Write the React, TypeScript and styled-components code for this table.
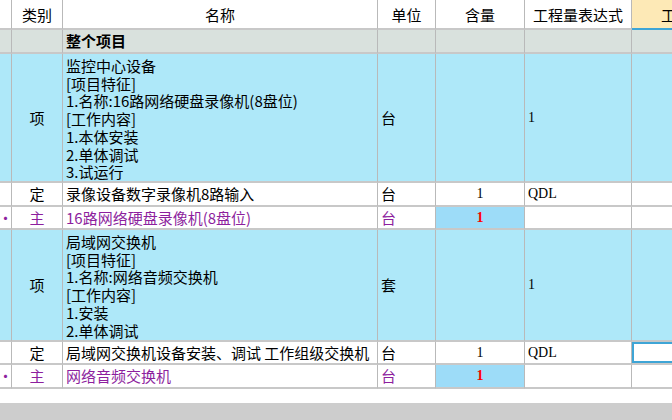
import React from 'react';
import styled, { createGlobalStyle, css } from 'styled-components';

const Global = createGlobalStyle`
  html, body { margin: 0; padding: 0; background: #ffffff; }
  body {
    font-family: "Noto Sans CJK SC", "Noto Sans", sans-serif;
    font-size: 15px;
    color: #000;
    overflow: hidden;
  }
  * { box-sizing: border-box; }
`;

const BLUE = '#aee8f9';
const GROUP = '#d9e1dd';
const PURPLE = '#8d1f9e';
const SEL = '#3ea5d6';

const Page = styled.div`
  width: 672px;
  height: 420px;
  display: flex;
  flex-direction: column;
  overflow: hidden;
  background: #fff;
`;

const Sheet = styled.div<{ $rows: string }>`
  display: grid;
  grid-template-columns: 12px 51px 315px 58px 89px 107px 104px;
  grid-template-rows: ${(p) => p.$rows};
  width: max-content;
`;

type Align = 'left' | 'center';

const Cell = styled.div<{
  $bg?: string;
  $align?: Align;
  $top?: boolean;
  $color?: string;
  $bold?: boolean;
  $num?: boolean;
  $selected?: boolean;
  $line?: string;
}>`
  display: flex;
  align-items: ${(p) => (p.$top ? 'flex-start' : 'center')};
  justify-content: ${(p) => (p.$align === 'center' ? 'center' : 'flex-start')};
  padding: ${(p) => (p.$top ? '3px 3px 0 3px' : '0 3px')};
  background: ${(p) => p.$bg || '#ffffff'};
  border-right: 1px solid #b9b9b9;
  border-bottom: 2px solid ${(p) => p.$line || '#c8c8c8'};
  color: ${(p) => p.$color || '#000'};
  font-weight: ${(p) => (p.$bold ? 700 : 400)};
  white-space: pre-line;
  line-height: 17.7px;
  overflow: hidden;
  ${(p) =>
    p.$num &&
    css`
      font-family: "Liberation Serif", "Noto Sans CJK SC", serif;
      font-size: 14px;
    `}
  ${(p) =>
    p.$selected &&
    css`
      box-shadow: inset 0 0 0 2px ${SEL};
    `}
`;

const HeaderCell = styled(Cell)`
  padding-top: 2px;
`;

const Filler = styled.div`
  height: 14px;
  background: #ffffff;
`;

const Footer = styled.div`
  flex: 1;
  background: #cdcdcd;
`;

type CellSpec = {
  text?: string;
  align?: Align;
  top?: boolean;
  color?: string;
  bold?: boolean;
  num?: boolean;
  bg?: string;
  selected?: boolean;
  line?: string;
};

type RowSpec = { height: number; bg: string; cells: CellSpec[]; header?: boolean };

const block = (name: string, unit: string): CellSpec[] => [
  {},
  { text: '项', align: 'center' },
  { text: name, top: true },
  { text: unit },
  {},
  { text: '1', num: true },
  {},
];

const quota = (name: string, selected = false): CellSpec[] => [
  {},
  { text: '定', align: 'center' },
  { text: name },
  { text: '台' },
  { text: '1', align: 'center', num: true },
  { text: 'QDL', num: true },
  { selected },
];

const main = (name: string): CellSpec[] => [
  { text: '·', color: PURPLE, align: 'center' },
  { text: '主', align: 'center', color: PURPLE },
  { text: name, color: PURPLE },
  { text: '台', color: PURPLE },
  { text: '1', align: 'center', color: '#ff0000', bold: true, num: true, bg: '#9ddcf8' },
  {},
  {},
];

const rows: RowSpec[] = [
  {
    height: 30,
    bg: '#ffffff',
    header: true,
    cells: [
      {},
      { text: '类别', align: 'center' },
      { text: '名称', align: 'center' },
      { text: '单位', align: 'center' },
      { text: '含量', align: 'center' },
      { text: '工程量表达式', align: 'center' },
      { text: '工程量', align: 'center', bg: '#fde9b6', line: SEL },
    ],
  },
  {
    height: 24,
    bg: GROUP,
    cells: [{}, {}, { text: '整个项目', bold: true }, {}, {}, {}, {}],
  },
  {
    height: 129,
    bg: BLUE,
    cells: block(
      '监控中心设备\n[项目特征]\n1.名称:16路网络硬盘录像机(8盘位)\n[工作内容]\n1.本体安装\n2.单体调试\n3.试运行',
      '台'
    ),
  },
  { height: 24, bg: '#ffffff', cells: quota('录像设备数字录像机8路输入') },
  { height: 23, bg: '#ffffff', cells: main('16路网络硬盘录像机(8盘位)') },
  {
    height: 112,
    bg: BLUE,
    cells: block(
      '局域网交换机\n[项目特征]\n1.名称:网络音频交换机\n[工作内容]\n1.安装\n2.单体调试',
      '套'
    ),
  },
  { height: 23, bg: '#ffffff', cells: quota('局域网交换机设备安装、调试 工作组级交换机', true) },
  { height: 24, bg: '#ffffff', cells: main('网络音频交换机') },
];

export default function App() {
  const template = rows.map((r) => `${r.height}px`).join(' ');
  return (
    <>
      <Global />
      <Page>
        <Sheet $rows={template}>
          {rows.map((row, ri) =>
            row.cells.map((c, ci) => {
              const C = row.header ? HeaderCell : Cell;
              return (
                <C
                  key={`${ri}-${ci}`}
                  $bg={c.bg || row.bg}
                  $align={c.align}
                  $top={c.top}
                  $color={c.color}
                  $bold={c.bold}
                  $num={c.num}
                  $selected={c.selected}
                  $line={c.line}
                >
                  {c.text}
                </C>
              );
            })
          )}
        </Sheet>
        <Filler />
        <Footer />
      </Page>
    </>
  );
}
